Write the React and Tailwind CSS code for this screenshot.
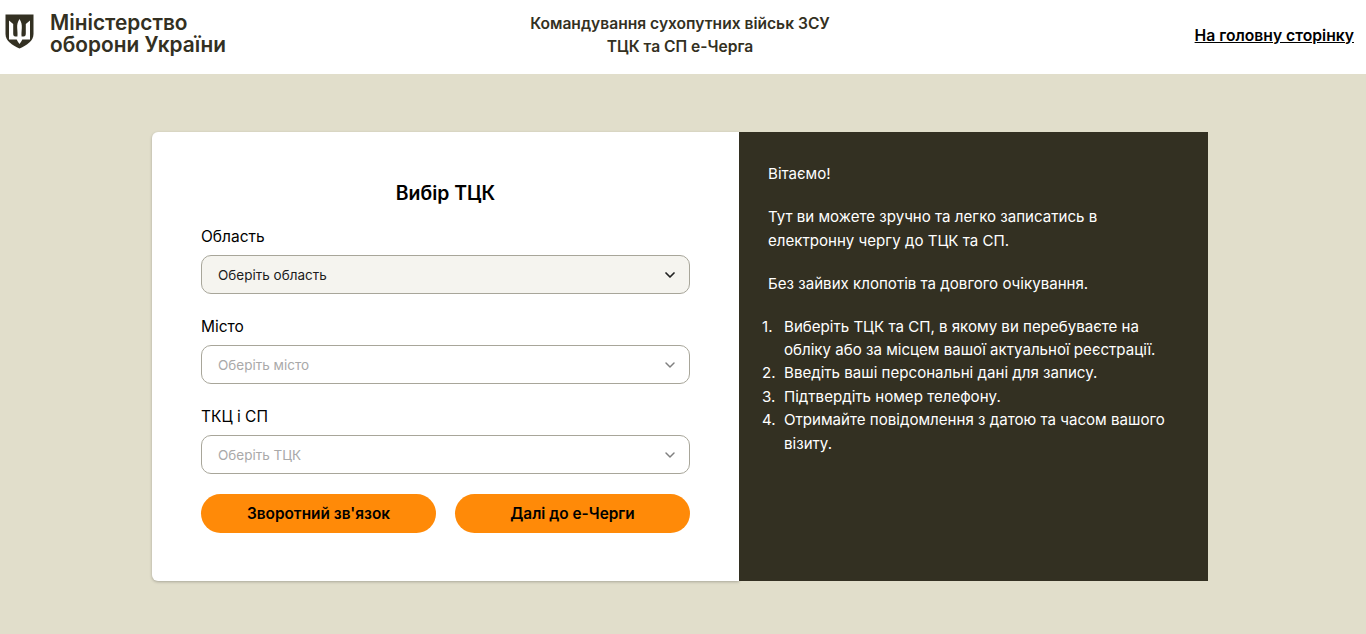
import { ChevronDown } from "lucide-react";

const Logo = () => (
  <svg width="29" height="35" viewBox="0 0 29 35" className="shrink-0 -mt-[4px]">
    <path d="M0.5 0.5H28.5V20C28.5 27 22 31 14.5 34.5C7 31 0.5 27 0.5 20Z" fill="#333022" />
    <path
      d="M14.5 5C16.4 8 17 10.5 16.8 14C16.6 17.5 16.3 20 16.6 22.5H18.6C20.2 22.5 20.8 21.2 20.8 19.5V10L25 6.5V25.5H17.3C16.7 27.2 15.7 28.6 14.5 30C13.3 28.6 12.3 27.2 11.7 25.5H4V6.5L8.2 10V19.5C8.2 21.2 8.8 22.5 10.4 22.5H12.4C12.7 20 12.4 17.5 12.2 14C12 10.5 12.6 8 14.5 5Z"
      fill="#fff"
    />
  </svg>
);

const SelectField = ({ label, placeholder, active }) => (
  <div className="flex flex-col">
    <label className="text-[15.5px] leading-[24px] text-black pt-[1px] mb-[6px]">{label}</label>
    <div
      className={`h-[39px] rounded-[10px] border border-[#a8a69a] pl-4 pr-[11px] flex items-center justify-between text-[13.5px] ${
        active ? "bg-[#f5f4ef] text-[#1c1c1c]" : "bg-white text-[#a9a9a9]"
      }`}
    >
      <span className="pt-[1px]">{placeholder}</span>
      <ChevronDown size={16} strokeWidth={active ? 2.6 : 2.2} className={active ? "text-[#222]" : "text-[#808080]"} />
    </div>
  </div>
);

const steps = [
  "Виберіть ТЦК та СП, в якому ви перебуваєте на обліку або за місцем вашої актуальної реєстрації.",
  "Введіть ваші персональні дані для запису.",
  "Підтвердіть номер телефону.",
  "Отримайте повідомлення з датою та часом вашого візиту.",
];

export default function App() {
  return (
    <div className="min-h-[634px] bg-[#e1decb] font-['Inter',sans-serif]">
      <header className="h-[74px] bg-white flex items-center justify-between pl-[5px] pr-3 pb-[4px]">
        <div className="flex items-center gap-[16px] w-[240px] pb-[3px]">
          <Logo />
          <div className="text-[20.85px] leading-[22px] font-semibold text-[#333022]">
            Міністерство
            <br />
            оборони України
          </div>
        </div>
        <div className="text-center text-[15.6px] leading-[23.5px] font-semibold text-[#333022]">
          Командування сухопутних військ ЗСУ
          <br />
          ТЦК та СП е-Черга
        </div>
        <div className="w-[239px] text-right">
          <a href="#" className="text-[15.7px] font-semibold text-black underline">
            На головну сторінку
          </a>
        </div>
      </header>

      <main className="flex pt-[58px] pl-[152px]">
        <section className="w-[587px] h-[449px] bg-white rounded-l-[6px] shadow-[0_1px_3px_rgba(0,0,0,0.25)] px-[49px] pt-[47px]">
          <h1 className="text-[19.4px] leading-[28px] font-semibold text-center text-black mb-[17px]">Вибір ТЦК</h1>
          <div className="flex flex-col gap-[20px]">
            <SelectField label="Область" placeholder="Оберіть область" active />
            <SelectField label="Місто" placeholder="Оберіть місто" />
            <SelectField label="ТКЦ і СП" placeholder="Оберіть ТЦК" />
          </div>
          <div className="flex gap-[19px] mt-5">
            <button className="flex-1 h-[39px] rounded-full bg-[#ff8a08] text-[15.4px] font-semibold text-black">
              Зворотний зв'язок
            </button>
            <button className="flex-1 h-[39px] rounded-full bg-[#ff8a08] text-[15.4px] font-semibold text-black">
              Далі до е-Черги
            </button>
          </div>
        </section>

        <aside className="w-[469px] h-[449px] bg-[#333022] text-white text-[15.1px] leading-[23.4px] pl-[29px] pr-[34px] pt-[30px]">
          <p className="mb-5">Вітаємо!</p>
          <p className="mb-5">Тут ви можете зручно та легко записатись в електронну чергу до ТЦК та СП.</p>
          <p className="mb-[19px]">Без зайвих клопотів та довгого очікування.</p>
          <ol className="-ml-[6px]">
            {steps.map((step, i) => (
              <li key={i} className="flex">
                <span className="w-[22px] shrink-0">{i + 1}.</span>
                <span>{step}</span>
              </li>
            ))}
          </ol>
        </aside>
      </main>
    </div>
  );
}
